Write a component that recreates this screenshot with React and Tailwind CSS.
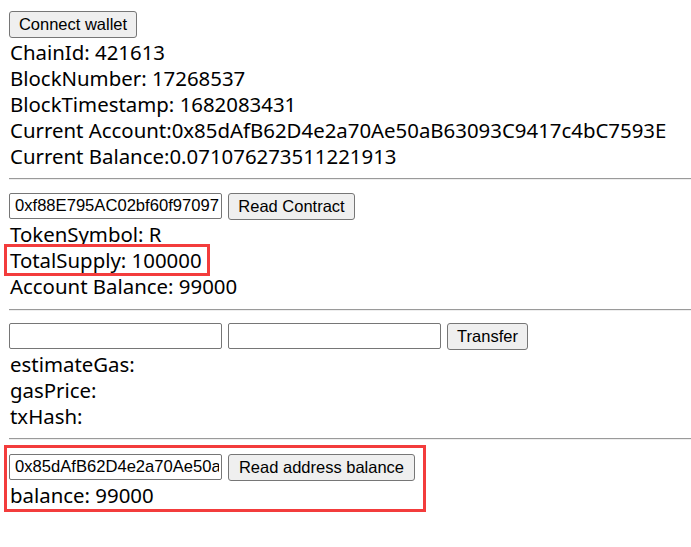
export default function App() {
  const line = "h-[26px] leading-[28px] whitespace-nowrap";
  const btn =
    "h-[27px] rounded-[3px] border border-[#767676] bg-[#efefef] text-[16.5px] text-black flex items-center justify-center font-['Liberation_Sans',Arial,sans-serif]";
  const input =
    "h-[26px] w-[213px] rounded-[2px] border border-[#767676] bg-white pl-[5px] pr-[2px] text-[16.6px] text-black outline-none font-['Liberation_Sans',Arial,sans-serif]";
  const hr = "h-[2px] border-t border-t-[#9a9a9a] border-b border-b-[#eeeeee] mr-[-20px]";
  return (
    <div className="w-[691px] h-[547px] overflow-hidden bg-white text-black text-[20.4px] font-['Noto_Sans','Noto_Sans_CJK_SC',sans-serif] pl-[9px] pr-0">
      <div className="pt-[11px]">
        <button className={`${btn} w-[128px]`}>Connect wallet</button>
      </div>
      <div className="pl-[1px]">
        <div className={line}>ChainId: 421613</div>
        <div className={line}>BlockNumber: 17268537</div>
        <div className={line}>BlockTimestamp: 1682083431</div>
        <div className={line}>Current Account:0x85dAfB62D4e2a70Ae50aB63093C9417c4bC7593E</div>
        <div className={line}>Current Balance:0.071076273511221913</div>
      </div>
      <div className="mt-[10px]">
        <div className={hr} />
      </div>
      <div className="mt-[13px] flex gap-[6px]">
        <input className={input} readOnly value="0xf88E795AC02bf60f97097c5C1a2d0cD1F3b4e8A2" />
        <button className={`${btn} w-[127px]`}>Read Contract</button>
      </div>
      <div className="pl-[1px]">
        <div className={line}>TokenSymbol: R</div>
        <div className={`${line} relative`}>
          TotalSupply: 100000
          <span className="absolute left-[-6px] top-[-2px] w-[206px] h-[32px] border-[3px] border-[#f33c3c]" />
        </div>
        <div className={line}>Account Balance: 99000</div>
      </div>
      <div className="mt-[11px]">
        <div className={hr} />
      </div>
      <div className="mt-[12px] flex gap-[6px]">
        <input className={input} readOnly value="" />
        <input className={input} readOnly value="" />
        <button className={`${btn} w-[81px]`}>Transfer</button>
      </div>
      <div className="pl-[1px]">
        <div className={line}>estimateGas:</div>
        <div className={line}>gasPrice:</div>
        <div className={line}>txHash:</div>
      </div>
      <div className="mt-[10px]">
        <div className={hr} />
      </div>
      <div className="relative mt-[14px]">
        <span className="absolute left-[-5px] top-[-9px] w-[422px] h-[67px] border-[3px] border-[#f33c3c]" />
        <div className="flex gap-[6px]">
          <input className={input} readOnly value="0x85dAfB62D4e2a70Ae50aB63093C9417c4bC7593E" />
          <button className={`${btn} w-[187px]`}>Read address balance</button>
        </div>
        <div className={`${line} pl-[1px]`}>balance: 99000</div>
      </div>
    </div>
  );
}
